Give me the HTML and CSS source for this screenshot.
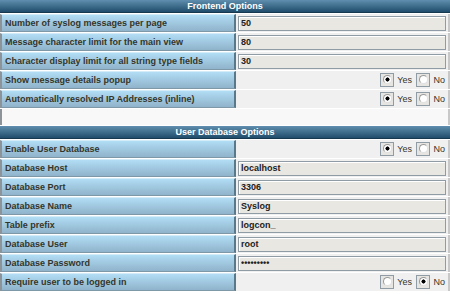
FILE: index.html
```html
<!DOCTYPE html>
<html>
<head>
    <title>Admin Center - Options</title>
    <link rel="stylesheet" href="styles.css">
</head>
<body>
    <table class="options">
        <colgroup>
            <col class="col-label">
            <col class="col-value">
        </colgroup>
        <tr><td colspan="2" class="title">Frontend Options</td></tr>
        <tr>
            <td class="label">Number of syslog messages per page</td>
            <td class="value"><input class="field" type="text" value="50"></td>
        </tr>
        <tr>
            <td class="label">Message character limit for the main view</td>
            <td class="value"><input class="field" type="text" value="80"></td>
        </tr>
        <tr>
            <td class="label">Character display limit for all string type fields</td>
            <td class="value"><input class="field" type="text" value="30"></td>
        </tr>
        <tr>
            <td class="label">Show message details popup</td>
            <td class="value choice">
                <span class="radio on"></span><span class="opt">Yes</span>
                <span class="radio"></span><span class="opt">No</span>
            </td>
        </tr>
        <tr>
            <td class="label">Automatically resolved IP Addresses (inline)</td>
            <td class="value choice">
                <span class="radio on"></span><span class="opt">Yes</span>
                <span class="radio"></span><span class="opt">No</span>
            </td>
        </tr>
        <tr><td colspan="2" class="spacer"></td></tr>
        <tr><td colspan="2" class="title">User Database Options</td></tr>
        <tr>
            <td class="label">Enable User Database</td>
            <td class="value choice">
                <span class="radio on"></span><span class="opt">Yes</span>
                <span class="radio"></span><span class="opt">No</span>
            </td>
        </tr>
        <tr>
            <td class="label">Database Host</td>
            <td class="value"><input class="field" type="text" value="localhost"></td>
        </tr>
        <tr>
            <td class="label">Database Port</td>
            <td class="value"><input class="field" type="text" value="3306"></td>
        </tr>
        <tr>
            <td class="label">Database Name</td>
            <td class="value"><input class="field" type="text" value="Syslog"></td>
        </tr>
        <tr>
            <td class="label">Table prefix</td>
            <td class="value"><input class="field" type="text" value="logcon_"></td>
        </tr>
        <tr>
            <td class="label">Database User</td>
            <td class="value"><input class="field" type="text" value="root"></td>
        </tr>
        <tr>
            <td class="label">Database Password</td>
            <td class="value"><input class="field" type="password" value="secretpw1"></td>
        </tr>
        <tr>
            <td class="label">Require user to be logged in</td>
            <td class="value choice">
                <span class="radio"></span><span class="opt">Yes</span>
                <span class="radio on"></span><span class="opt">No</span>
            </td>
        </tr>
    </table>
</body>
</html>
```

FILE: styles.css
```css
body {
    margin: 0;
    background: #ffffff;
    font-family: "Liberation Sans", Arial, sans-serif;
    font-size: 9px;
    color: #35352a;
}
.options {
    width: 450px;
    table-layout: fixed;
    border-collapse: separate;
    border-spacing: 0 1px;
    margin-top: -1px;
}
.col-label {
    width: 236px;
}
.options td {
    padding: 0;
}
.title {
    height: 12px;
    background: linear-gradient(#5f8eae, #1f4c6a);
    border-bottom: 1px solid #17394f;
    color: #ffffff;
    font-size: 9px;
    font-weight: bold;
    text-align: center;
    line-height: 12px;
}
.label {
    height: 16px;
    padding-left: 3px !important;
    background: linear-gradient(#b1ddf5, #8fb3ca);
    border-left: 2px solid #8d9499;
    border-right: 2px solid #58788c;
    border-bottom: 1px solid #7f98a8;
    border-top: 1px solid #d4ecf8;
    font-weight: bold;
    color: #35352a;
    white-space: nowrap;
    overflow: hidden;
}
.value {
    background: #f0f0f0;
    border-right: 2px solid #c8c8c8;
    padding: 0 1px 0 2px !important;
}
.field {
    box-sizing: border-box;
    width: 208px;
    height: 15px;
    margin: 0;
    padding: 0 2px;
    display: block;
    background: #e9e7e1;
    border: 1px solid #8f9ca6;
    box-shadow: inset 1px 1px 0 #ffffff;
    font-family: "Liberation Sans", Arial, sans-serif;
    font-size: 9px;
    font-weight: bold;
    color: #222222;
}
.choice {
    text-align: right;
    white-space: nowrap;
}
.radio {
    display: inline-block;
    box-sizing: border-box;
    width: 14px;
    height: 14px;
    vertical-align: middle;
    background: #e6e5e1;
    border: 1px solid #8f9ca6;
    position: relative;
}
.radio::after {
    content: "";
    position: absolute;
    left: 2px;
    top: 1px;
    width: 7px;
    height: 7px;
    border-radius: 50%;
    background: #ffffff;
    border: 1px solid #999999;
    border-right-color: #e0e0e0;
    border-bottom-color: #e0e0e0;
}
.radio.on::after {
    background: radial-gradient(circle, #000000 0 1.8px, #ffffff 2.3px);
}
.opt {
    display: inline-block;
    vertical-align: middle;
    margin: 0 2px 0 3px;
    color: #35352a;
}
.spacer {
    height: 16px;
    background: #f8f8f8;
    border-left: 2px solid #8d9499;
    border-right: 2px solid #c8c8c8;
}
```
